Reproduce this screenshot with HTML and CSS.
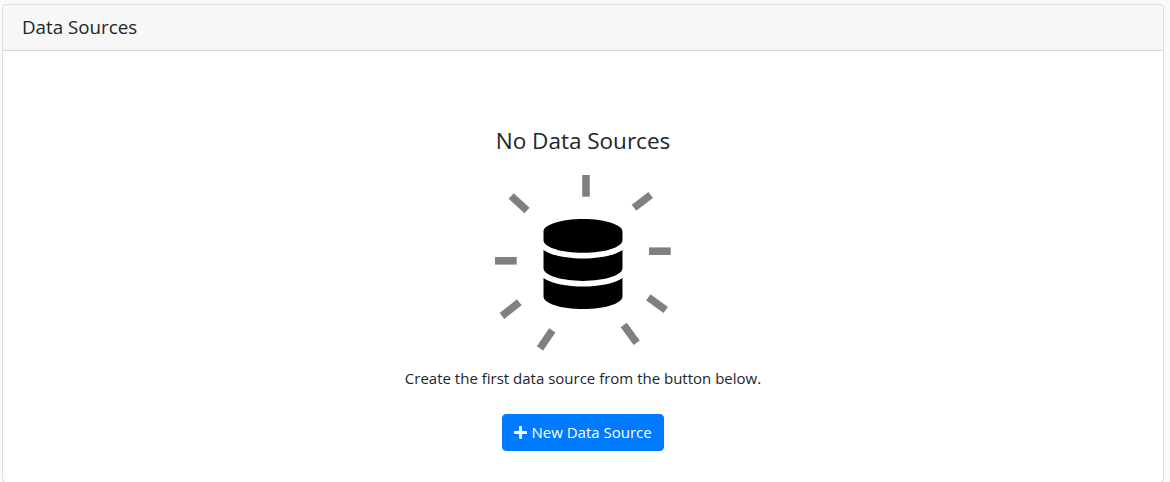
FILE: index.html
```html
<!DOCTYPE html>
<html lang="en">
<head>
<meta charset="utf-8">
<title>Data Sources</title>
<link rel="stylesheet" href="styles.css">
</head>
<body>
<div class="card">
  <div class="card-header">Data Sources</div>
  <div class="card-body">
    <h2 class="empty-title">No Data Sources</h2>
    <svg class="empty-icon" viewBox="495 175 176 177" width="176" height="177" aria-hidden="true">
      <g class="rays">
        <line x1="586" y1="175" x2="586" y2="196.7"/>
        <line x1="650.7" y1="195" x2="634" y2="207.7"/>
        <line x1="649" y1="251.2" x2="670.7" y2="251.2"/>
        <line x1="648.3" y1="297.3" x2="665.7" y2="310"/>
        <line x1="623.7" y1="325" x2="636.7" y2="342.7"/>
        <line x1="552.3" y1="330.3" x2="540" y2="348.3"/>
        <line x1="519.3" y1="302.3" x2="502" y2="316"/>
        <line x1="495" y1="260.8" x2="516.7" y2="260.8"/>
        <line x1="511.2" y1="196" x2="527" y2="210.5"/>
      </g>
      <svg x="543.3" y="219" width="79.4" height="90" viewBox="0 0 448 512" preserveAspectRatio="none">
        <path d="M448 73.143v45.714C448 159.143 347.667 192 224 192S0 159.143 0 118.857V73.143C0 32.857 100.333 0 224 0s224 32.857 224 73.143zM448 176v102.857C448 319.143 347.667 352 224 352S0 319.143 0 278.857V176c48.125 33.143 136.208 48.572 224 48.572S399.874 209.143 448 176zm0 160v102.857C448 479.143 347.667 512 224 512S0 479.143 0 438.857V336c48.125 33.143 136.208 48.572 224 48.572S399.874 369.143 448 336z"/>
      </svg>
    </svg>
    <p class="empty-text">Create the first data source from the button below.</p>
    <button class="btn" type="button">
      <svg class="btn-icon" viewBox="0 0 448 512" aria-hidden="true"><path d="M416 208H272V64c0-17.67-14.33-32-32-32h-32c-17.67 0-32 14.33-32 32v144H32c-17.67 0-32 14.33-32 32v32c0 17.67 14.33 32 32 32h144v144c0 17.67 14.33 32 32 32h32c17.67 0 32-14.33 32-32V304h144c17.67 0 32-14.33 32-32v-32c0-17.67-14.33-32-32-32z"/></svg>
      <span class="btn-label">New Data Source</span>
    </button>
  </div>
</div>
</body>
</html>
```
FILE: styles.css
```css
* { box-sizing: border-box; }
html, body { height: 100%; }
body {
  margin: 0;
  padding: 4px 6px 0 2px;
  background: #fafafa;
  font-family: "Open Sans", sans-serif;
  color: #212529;
  overflow: hidden;
}
.card {
  height: 479px;
  background: #fff;
  border: 1px solid rgba(0, 0, 0, 0.125);
  border-radius: 4px;
  display: flex;
  flex-direction: column;
}
.card-header {
  height: 46px;
  padding: 0 19px 2px;
  display: flex;
  align-items: center;
  background: #f7f7f7;
  border-bottom: 1px solid rgba(0, 0, 0, 0.125);
  border-radius: 3px 3px 0 0;
  font-size: 18.75px;
}
.card-body {
  flex: 1;
  display: flex;
  flex-direction: column;
  align-items: center;
  padding-top: 73px;
}
.empty-title {
  margin: 0;
  font-size: 22.5px;
  font-weight: 400;
  line-height: 33px;
}
.empty-icon { display: block; margin-top: 18px; }
.rays line { stroke: #808080; stroke-width: 7.6; }
.empty-text {
  margin: 15px 0 0;
  font-size: 15px;
  line-height: 22px;
}
.btn {
  margin-top: 25px;
  width: 162px;
  height: 37px;
  padding: 0;
  display: flex;
  align-items: center;
  justify-content: center;
  gap: 4px;
  background: #007bff;
  color: #fff;
  border: 1px solid #007bff;
  border-radius: 4px;
  font: 15px "Open Sans", sans-serif;
}
.btn-label { padding-bottom: 2px; }
.btn-icon { width: 13.1px; height: 15px; fill: #fff; }
```
